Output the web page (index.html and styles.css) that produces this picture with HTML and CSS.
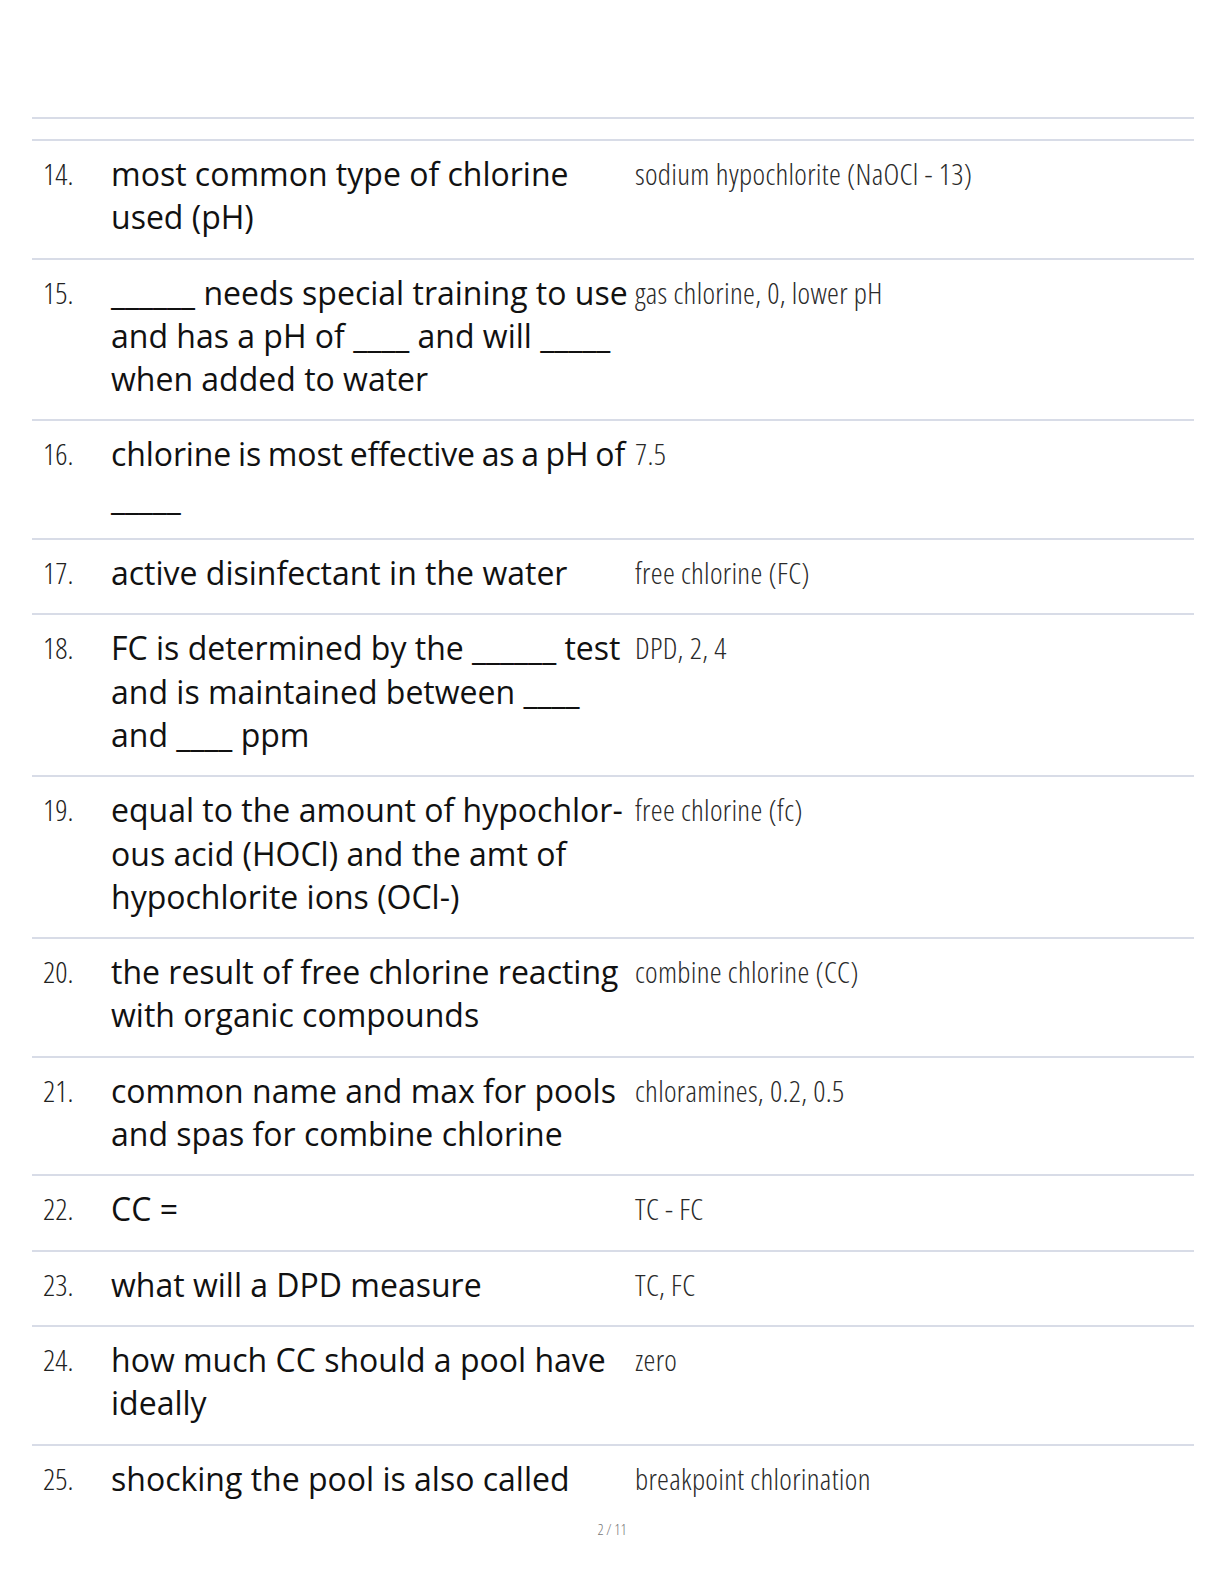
FILE: index.html
```html
<!DOCTYPE html>
<html lang="en">
<head>
<meta charset="utf-8">
<link rel="stylesheet" href="styles.css">
</head>
<body>
<div class="page">
  <div class="list">
    <div class="row empty"></div>
    <div class="row"><div class="num">14.</div><div class="term">most common type of chlorine used (pH)</div><div class="def">sodium hypochlorite (NaOCl - 13)</div></div>
    <div class="row"><div class="num">15.</div><div class="term">______ needs special training to use and has a pH of ____ and will _____ when added to water</div><div class="def">gas chlorine, 0, lower pH</div></div>
    <div class="row"><div class="num">16.</div><div class="term tight">chlorine is most effective as a pH of _____</div><div class="def">7.5</div></div>
    <div class="row"><div class="num">17.</div><div class="term">active disinfectant in the water</div><div class="def">free chlorine (FC)</div></div>
    <div class="row"><div class="num">18.</div><div class="term">FC is determined by the ______ test and is maintained between ____ and ____ ppm</div><div class="def">DPD, 2, 4</div></div>
    <div class="row"><div class="num">19.</div><div class="term">equal to the amount of hypochlor&shy;ous acid (HOCl) and the amt of hypochlorite ions (OCl-)</div><div class="def">free chlorine (fc)</div></div>
    <div class="row"><div class="num">20.</div><div class="term">the result of free chlorine reacting with organic compounds</div><div class="def">combine chlorine (CC)</div></div>
    <div class="row"><div class="num">21.</div><div class="term">common name and max for pools and spas for combine chlorine</div><div class="def">chloramines, 0.2, 0.5</div></div>
    <div class="row"><div class="num">22.</div><div class="term">CC =</div><div class="def">TC - FC</div></div>
    <div class="row"><div class="num">23.</div><div class="term">what will a DPD measure</div><div class="def">TC, FC</div></div>
    <div class="row"><div class="num">24.</div><div class="term">how much CC should a pool have ideally</div><div class="def">zero</div></div>
    <div class="row"><div class="num">25.</div><div class="term">shocking the pool is also called</div><div class="def">breakpoint chlorination</div></div>
  </div>
  <div class="pager">2 / 11</div>
</div>
</body>
</html>
```
FILE: styles.css
```css
html, body {
  margin: 0;
  padding: 0;
  background: #ffffff;
}
.page {
  width: 1224px;
  height: 1584px;
  padding-top: 117px;
  box-sizing: border-box;
}
.list {
  margin-left: 32px;
  width: 1162px;
}
.row {
  display: flex;
  border-top: 2px solid #d8dce7;
  padding: 11px 0 19px 0;
}
.row:last-child {
  padding-bottom: 17px;
}
.row.empty {
  padding: 0;
  height: 20px;
}
.num {
  width: 68px;
  padding-left: 11px;
  flex: none;
  font-family: "Open Sans", sans-serif;
  font-stretch: 75%;
  font-weight: 300;
  font-size: 30px;
  line-height: 43.3px;
  color: #222222;
}
.term {
  width: 520px;
  flex: none;
  font-family: "Open Sans", sans-serif;
  font-size: 32px;
  line-height: 43.3px;
  color: #111111;
}
.term.tight {
  word-spacing: -1.5px;
  letter-spacing: -0.1px;
}
.def {
  margin-left: 4px;
  flex: 1;
  font-family: "Open Sans", sans-serif;
  font-stretch: 75%;
  font-weight: 300;
  font-size: 30px;
  letter-spacing: 0.3px;
  line-height: 43.3px;
  color: #2a2a2a;
}
.pager {
  margin-top: 2px;
  text-align: center;
  font-family: "Open Sans", sans-serif;
  font-stretch: 75%;
  font-weight: 300;
  font-size: 15px;
  color: #777777;
}
```
